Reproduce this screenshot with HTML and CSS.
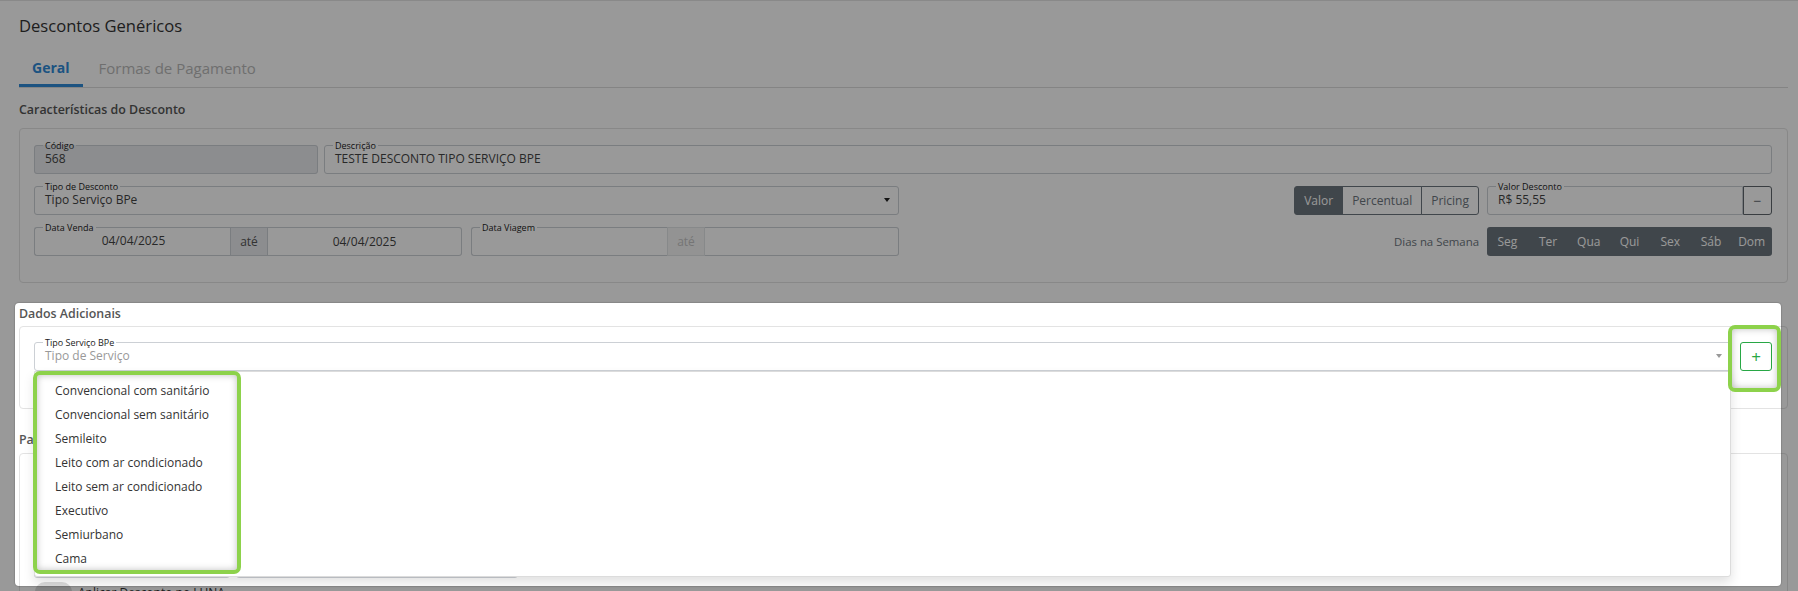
FILE: index.html
```html
<!DOCTYPE html>
<html lang="pt-BR">
<head>
<meta charset="utf-8">
<title>Descontos Genéricos</title>
<link rel="stylesheet" href="styles.css">
</head>
<body>
<div class="page">
  <h1 class="page-title">Descontos Genéricos</h1>
  <nav class="tabs">
    <a class="tab active">Geral</a>
    <a class="tab">Formas de Pagamento</a>
  </nav>

  <h2 class="section-title first">Características do Desconto</h2>
  <section class="panel">
    <div class="row">
      <fieldset class="fs disabled code"><legend>Código</legend><div class="fs-val">568</div></fieldset>
      <fieldset class="fs grow"><legend>Descrição</legend><div class="fs-val">TESTE DESCONTO TIPO SERVIÇO BPE</div></fieldset>
    </div>
    <div class="row split">
      <div class="col">
        <fieldset class="fs select"><legend>Tipo de Desconto</legend><div class="fs-val">Tipo Serviço BPe<span class="caret"></span></div></fieldset>
      </div>
      <div class="col right">
        <div class="btn-group">
          <button class="btn active">Valor</button><button class="btn">Percentual</button><button class="btn">Pricing</button>
        </div>
        <div class="money">
          <fieldset class="fs"><legend>Valor Desconto</legend><div class="fs-val">R$ 55,55</div></fieldset>
          <button class="btn-minus">−</button>
        </div>
      </div>
    </div>
    <div class="row split">
      <div class="col dates">
        <div class="date">
          <fieldset class="fs"><legend>Data Venda</legend><div class="fs-val center">04/04/2025</div></fieldset>
          <span class="addon">até</span>
          <div class="box">04/04/2025</div>
        </div>
        <div class="date off">
          <fieldset class="fs"><legend>Data Viagem</legend><div class="fs-val center"></div></fieldset>
          <span class="addon">até</span>
          <div class="box"></div>
        </div>
      </div>
      <div class="col right">
        <span class="days-label">Dias na Semana</span>
        <div class="days">
          <span class="day">Seg</span><span class="day">Ter</span><span class="day">Qua</span><span class="day">Qui</span><span class="day">Sex</span><span class="day">Sáb</span><span class="day">Dom</span>
        </div>
      </div>
    </div>
  </section>

  <h2 class="section-title">Dados Adicionais</h2>
  <section class="panel panel-add">
    <div class="row add-row">
      <div class="select-wrap">
        <fieldset class="fs select"><legend>Tipo Serviço BPe</legend><div class="fs-val placeholder">Tipo de Serviço<span class="caret light"></span></div></fieldset>
        <ul class="dropdown">
          <li>Convencional com sanitário</li>
          <li>Convencional sem sanitário</li>
          <li>Semileito</li>
          <li>Leito com ar condicionado</li>
          <li>Leito sem ar condicionado</li>
          <li>Executivo</li>
          <li>Semiurbano</li>
          <li>Cama</li>
        </ul>
      </div>
      <button class="btn-add">+</button>
    </div>
  </section>

  <h2 class="section-title param">Parâmetros</h2>
  <section class="panel panel-param">
    <div class="row">
      <fieldset class="fs w-a"><legend>Origem</legend><div class="fs-val"></div></fieldset>
      <fieldset class="fs w-b"><legend>Destino</legend><div class="fs-val"></div></fieldset>
    </div>
    <div class="row">
      <fieldset class="fs w-a"><legend>Linha</legend><div class="fs-val"></div></fieldset>
      <fieldset class="fs w-b"><legend>Empresa</legend><div class="fs-val"></div></fieldset>
    </div>
    <div class="row">
      <fieldset class="fs w-a"><legend>Horário</legend><div class="fs-val"></div></fieldset>
      <fieldset class="fs w-b"><legend>Classe</legend><div class="fs-val"></div></fieldset>
    </div>
    <div class="toggle-row"><span class="switch"></span><span>Aplicar Desconto no LUNA</span></div>
  </section>
</div>

<div class="spotlight"></div>
<div class="tour-ring ring-list"></div>
<div class="tour-ring ring-add"></div>
</body>
</html>
```

FILE: styles.css
```css
* { box-sizing: border-box; }

html, body {
  margin: 0;
  padding: 0;
  overflow: hidden;
  background: #fff;
}

body {
  position: relative;
  width: 1798px;
  height: 591px;
  font-family: "Open Sans", "Noto Sans", sans-serif;
  color: #333;
}

.page {
  padding: 14px 10px 0 19px;
  border-top: 1px solid #e4e4e4;
}

.page-title {
  margin: 0;
  font-size: 16.6px;
  line-height: 22px;
  font-weight: 400;
  color: #333;
}

.tabs {
  display: flex;
  gap: 3px;
  margin-top: 13px;
  border-bottom: 1px solid #dcdcdc;
}

.tab {
  padding: 8px 13px 6px;
  line-height: 20px;
  font-size: 14px;
  color: #b9b9b9;
  border-bottom: 3px solid transparent;
}

.tab + .tab { font-size: 15px; }

.tab.active {
  color: #2f8ad8;
  font-weight: 700;
  border-bottom-color: #2f8ad8;
}

.section-title {
  margin: 22px 0 3px;
  font-size: 12.4px;
  line-height: 18px;
  font-weight: 600;
  color: #555;
}

.section-title.first { margin: 13px 0 9px; }
.section-title.param { margin: 22px 0 4px; }

.panel {
  border: 1px solid #e3e3e3;
  border-radius: 4px;
  padding: 11px 15px 26px 14px;
  background: #fff;
}

.row {
  display: flex;
  align-items: flex-end;
  gap: 6px;
}

.row + .row { margin-top: 7px; }

.split { gap: 8px; }

.split > .col {
  flex: 1 1 0;
  min-width: 0;
}

.col.right {
  display: flex;
  justify-content: flex-end;
  align-items: flex-end;
  gap: 8px;
}

/* fieldset inputs */
.fs {
  margin: 0;
  min-width: 0;
  border: 1px solid #ccd0d5;
  border-radius: 3px;
  padding: 0 8px;
  background: #fff;
}

.fs legend {
  padding: 0 2px;
  font-size: 9px;
  line-height: 11px;
  color: #222;
}

.fs-val {
  height: 22px;
  padding: 0 0 6px 2px;
  line-height: 16px;
  font-size: 12px;
  color: #444;
  white-space: nowrap;
}

.fs-val.center { text-align: center; }

.fs.disabled { background: #e9ecef; }
.fs.code { flex: 0 0 284px; }
.fs.grow { flex: 1; }
.col > .fs { width: 100%; }

.fs.select .fs-val {
  display: flex;
  justify-content: space-between;
  align-items: flex-start;
}

.caret {
  width: 0;
  height: 0;
  margin-top: 6px;
  border-left: 3.5px solid transparent;
  border-right: 3.5px solid transparent;
  border-top: 4px solid #222;
}

.caret.light { border-top-color: #999; }

.placeholder { color: #999; }

/* date groups */
.dates {
  display: grid;
  grid-template-columns: 1fr 1fr;
  gap: 9px;
}

.date {
  display: flex;
  align-items: flex-end;
}

.date .fs {
  flex: 0 0 196px;
  border-right: 0;
  border-radius: 3px 0 0 3px;
}

.addon {
  flex: 0 0 38px;
  height: 29px;
  display: flex;
  align-items: center;
  justify-content: center;
  background: #e9ecef;
  border: 1px solid #ccd0d5;
  font-size: 12px;
  color: #555;
}

.box {
  flex: 1;
  height: 29px;
  display: flex;
  align-items: center;
  justify-content: center;
  border: 1px solid #ccd0d5;
  border-left: 0;
  border-radius: 0 3px 3px 0;
  font-size: 12px;
  color: #444;
}

.date.off .addon {
  background: #f6f6f6;
  border-color: #e2e4e7;
  color: #c4c4c4;
}

/* buttons */
.btn-group {
  display: flex;
  height: 29px;
}

.btn {
  height: 29px;
  padding: 0 9px;
  font-family: inherit;
  font-size: 12px;
  color: #6c757d;
  background: #fff;
  border: 1px solid #6c757d;
  margin-left: -1px;
}

.btn:first-child { margin-left: 0; border-radius: 3px 0 0 3px; }
.btn:last-child { border-radius: 0 3px 3px 0; }

.btn.active {
  background: #6c757d;
  color: #fff;
}

.money {
  display: flex;
  align-items: flex-end;
  width: 285px;
}

.money .fs {
  flex: 1;
  border-radius: 3px 0 0 3px;
}

.btn-minus {
  flex: 0 0 29px;
  height: 29px;
  padding: 0;
  border: 1px solid #5f666d;
  border-radius: 0 3px 3px 0;
  background: #fff;
  color: #5f666d;
  font-family: inherit;
  font-size: 14px;
}

.days-label {
  line-height: 29px;
  font-size: 11.4px;
  color: #6c757d;
}

.days {
  display: flex;
  width: 285px;
  height: 29px;
  background: #6c757d;
  border-radius: 3px;
}

.day {
  flex: 1;
  display: flex;
  align-items: center;
  justify-content: center;
  font-size: 12px;
  color: #fff;
}

/* dados adicionais */
.panel-add { padding: 10px 15px 37px 14px; }

.add-row { gap: 9px; }

.select-wrap {
  position: relative;
  flex: 1;
  min-width: 0;
}

.select-wrap > .fs { width: 100%; }

.dropdown {
  position: absolute;
  top: 100%;
  left: 0;
  right: 0;
  z-index: 5;
  margin: 0;
  padding: 7px 0 5px;
  list-style: none;
  background: #fff;
  border: 1px solid #dcdcdc;
  border-radius: 0 0 3px 3px;
  box-shadow: 0 6px 12px rgba(0, 0, 0, 0.12);
}

.dropdown li {
  padding: 0 20px;
  line-height: 24px;
  font-size: 12px;
  color: #333;
}

.btn-add {
  flex: 0 0 32px;
  height: 29px;
  padding: 0;
  border: 1px solid #28a745;
  border-radius: 3px;
  background: #fff;
  color: #28a745;
  font-family: inherit;
  font-size: 17px;
  line-height: 1;
}

/* parametros */
.panel-param { padding: 8px 15px 0 14px; }

.fs.w-a { flex: 0 0 196px; }
.fs.w-b { flex: 0 0 282px; }

.toggle-row {
  display: flex;
  align-items: center;
  gap: 6px;
  margin-top: 4px;
  padding-left: 1px;
  font-size: 12px;
  color: #333;
}

.switch {
  width: 37px;
  height: 20px;
  border-radius: 10px;
  background: #dcdcdc;
}

/* tour overlay */
.spotlight {
  position: absolute;
  left: 15px;
  top: 303px;
  width: 1766px;
  height: 283px;
  border-radius: 4px;
  z-index: 20;
  box-shadow: 0 0 1px 1px rgba(0, 0, 0, 0.12), 0 0 0 4000px rgba(0, 0, 0, 0.4);
  pointer-events: none;
}

.tour-ring {
  position: absolute;
  z-index: 21;
  border: 4px solid #8dd24b;
  border-radius: 7px;
  box-shadow: inset 0 0 7px rgba(0, 0, 0, 0.25);
  pointer-events: none;
}

.ring-list {
  left: 33px;
  top: 371px;
  width: 208px;
  height: 203px;
}

.ring-add {
  left: 1728px;
  top: 325px;
  width: 53px;
  height: 67px;
}
```
